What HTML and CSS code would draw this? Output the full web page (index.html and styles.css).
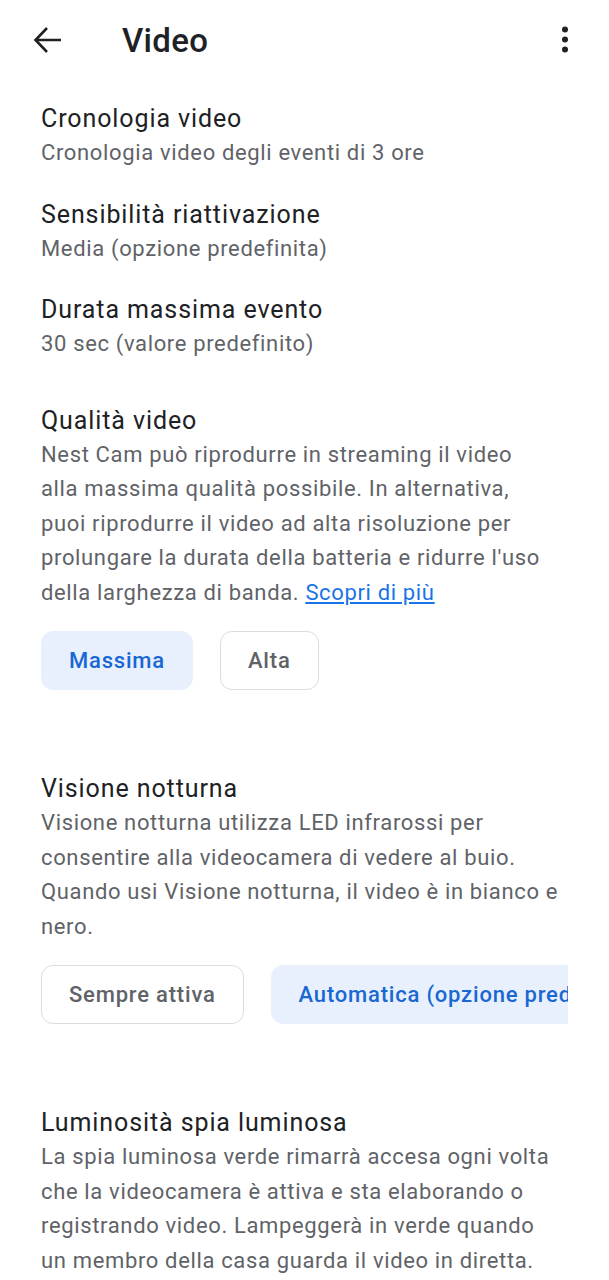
FILE: index.html
```html
<!DOCTYPE html>
<html lang="it">
<head>
    <meta charset="UTF-8">
    <meta name="viewport" content="width=device-width, initial-scale=1.0">
    <title>Video</title>
    <link rel="stylesheet" href="styles.css">
</head>
<body>
    <div class="bar">
        <span class="back">
            <svg width="30" height="28" viewBox="0 0 30 28"><path d="M28 14H3M14 2L2.5 14 14 26" fill="none" stroke="#202124" stroke-width="2.6"/></svg>
        </span>
        <h1 class="title">Video</h1>
        <span class="more">
            <svg width="8" height="28" viewBox="0 0 8 28"><circle cx="4" cy="3.5" r="3"/><circle cx="4" cy="13.5" r="3"/><circle cx="4" cy="23.5" r="3"/></svg>
        </span>
    </div>

    <div class="content">
        <div class="item">
            <div class="name">Cronologia video</div>
            <div class="desc">Cronologia video degli eventi di 3 ore</div>
        </div>
        <div class="item">
            <div class="name">Sensibilità riattivazione</div>
            <div class="desc">Media (opzione predefinita)</div>
        </div>
        <div class="item">
            <div class="name">Durata massima evento</div>
            <div class="desc">30 sec (valore predefinito)</div>
        </div>

        <div class="block first">
            <div class="name">Qualità video</div>
            <div class="desc narrow">Nest Cam può riprodurre in streaming il video alla massima qualità possibile. In alternativa, puoi riprodurre il video ad alta risoluzione per prolungare la durata della batteria e ridurre l'uso della larghezza di banda. <a href="#">Scopri di più</a></div>
            <div class="chips">
                <span class="chip on">Massima</span>
                <span class="chip">Alta</span>
            </div>
        </div>

        <div class="block">
            <div class="name">Visione notturna</div>
            <div class="desc">Visione notturna utilizza LED infrarossi per consentire alla videocamera di vedere al buio. Quando usi Visione notturna, il video è in bianco e nero.</div>
            <div class="chips">
                <span class="chip">Sempre attiva</span>
                <span class="chip on">Automatica (opzione predefinita)</span>
            </div>
        </div>

        <div class="block">
            <div class="name">Luminosità spia luminosa</div>
            <div class="desc">La spia luminosa verde rimarrà accesa ogni volta che la videocamera è attiva e sta elaborando o registrando video. Lampeggerà in verde quando un membro della casa guarda il video in diretta.</div>
        </div>
    </div>
</body>
</html>
```

FILE: styles.css
```css
*{
    padding: 0;
    margin: 0;
    box-sizing: border-box;
}
body{
    font-family: Roboto, "Noto Sans", sans-serif;
    color: #202124;
    background: #fff;
    width: 609px;
}
.bar{
    display: flex;
    align-items: center;
    height: 80px;
    padding: 0 40px 0 33px;
}
.back{
    display: flex;
    width: 89px;
}
.title{
    flex: 1;
    font-size: 33px;
    font-weight: 500;
    letter-spacing: 0.3px;
}
.more{
    display: flex;
    fill: #202124;
}
.content{
    padding: 22px 0 0 41px;
}
.item{
    margin-bottom: 27px;
}
.name{
    font-size: 25px;
    line-height: 34px;
    letter-spacing: 0.9px;
    color: #202124;
}
.desc{
    font-size: 22px;
    line-height: 34.5px;
    letter-spacing: 0.65px;
    color: #5f6368;
    padding-right: 49px;
}
.desc.narrow{
    padding-right: 58px;
}
.desc a{
    color: #1a73e8;
}
.block{
    margin-top: 82px;
}
.block.first{
    margin-top: 42px;
}
.chips{
    display: flex;
    gap: 27px;
    margin-top: 21px;
    margin-right: 41px;
    overflow: hidden;
}
.chip{
    flex: none;
    height: 59px;
    line-height: 57px;
    padding: 0 27px;
    border: 1px solid #dadce0;
    border-radius: 12px;
    font-size: 22px;
    font-weight: 500;
    letter-spacing: 0.8px;
    color: #5f6368;
}
.chip.on{
    background: #e8f0fe;
    border-color: #e8f0fe;
    color: #1967d2;
}
```
